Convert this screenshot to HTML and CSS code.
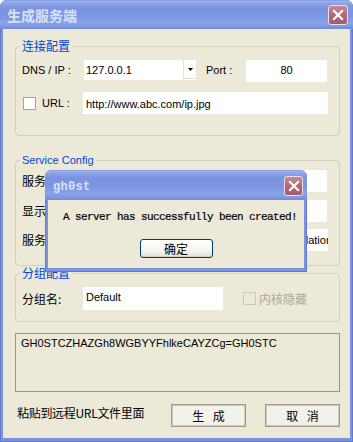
FILE: index.html
```html
<!DOCTYPE html>
<html>
<head>
<meta charset="utf-8">
<link rel="stylesheet" href="styles.css">
</head>
<body>
<div class="window">
  <div class="titlebar">
    <span class="title">生成服务端</span>
    <span class="close"><svg width="12" height="12" viewBox="0 0 12 12"><path d="M2 2L10 10M10 2L2 10" stroke="#fff" stroke-width="2.2" stroke-linecap="square"/></svg></span>
  </div>
  <div class="client">
    <div class="group g1">
      <div class="legend cjk">连接配置</div>
      <div class="row r1">
        <span class="label lbl-dns">DNS / IP :</span>
        <div class="combo">
          <span class="combo-text">127.0.0.1</span>
          <span class="combo-btn"><svg width="5" height="3" viewBox="0 0 5 3"><path d="M0 0H5L2.5 3Z" fill="#000"/></svg></span>
        </div>
        <span class="label lbl-port">Port :</span>
        <div class="field port">80</div>
      </div>
      <div class="row r2">
        <span class="check"></span>
        <span class="label lbl-url">URL :</span>
        <div class="field url">http://www.abc.com/ip.jpg</div>
      </div>
    </div>

    <div class="group g2">
      <div class="legend">Service Config</div>
      <div class="row ra">
        <span class="label cjk lbl-svc">服务名称:</span>
        <div class="field svc">Medialinks</div>
      </div>
      <div class="row rb">
        <span class="label cjk lbl-svc">显示名称:</span>
        <div class="field svc">Microsoft Device Manager</div>
      </div>
      <div class="row rc">
        <span class="label cjk lbl-svc">服务描述:</span>
        <div class="field svc end"><span class="tail">Monitors and Manages System Device Installation</span></div>
      </div>
    </div>

    <div class="group g3">
      <div class="legend cjk">分组配置</div>
      <div class="row rg">
        <span class="label cjk lbl-svc">分组名:</span>
        <div class="field grp">Default</div>
        <span class="check disabled"></span>
        <span class="label cjk dis">内核隐藏</span>
      </div>
    </div>

    <div class="textbox">GH0STCZHAZGh8WGBYYFhlkeCAYZCg=GH0STC</div>

    <div class="footer">
      <span class="hint cjk">粘贴到远程URL文件里面</span>
      <div class="buttons">
        <div class="btn cjk">生 成</div>
        <div class="btn cjk">取 消</div>
      </div>
    </div>
  </div>

  <div class="dialog">
    <div class="dlg-title">
      <span class="dlg-name">gh0st</span>
      <span class="close dlg-close"><svg width="12" height="12" viewBox="0 0 12 12"><path d="M2 2L10 10M10 2L2 10" stroke="#fff" stroke-width="2.2" stroke-linecap="square"/></svg></span>
    </div>
    <div class="dlg-body">
      <div class="dlg-msg">A server has successfully been created!</div>
      <div class="dlg-btn cjk">确定</div>
    </div>
  </div>
</div>
</body>
</html>
```

FILE: styles.css
```css
body {
  margin: 0;
  background: #ffffff;
  font-family: "Liberation Sans", "Noto Sans CJK SC", sans-serif;
  font-size: 11px;
  color: #000;
}

.window {
  position: relative;
  width: 353px;
  height: 442px;
  box-sizing: border-box;
  padding: 0 3px 4px;
  background: #7b92df;
  border-radius: 7px 7px 0 0;
  display: flex;
  flex-direction: column;
  overflow: hidden;
  box-shadow: inset 1px 0 0 #6379cf, inset -1px 0 0 #6379cf, inset 0 -1px 0 #6379cf;
}

.titlebar {
  height: 29px;
  margin: 0 -3px;
  padding: 0 5px 0 7px;
  display: flex;
  align-items: center;
  border-radius: 7px 7px 0 0;
  background: linear-gradient(180deg, #6d85d9 0px, #a4b7ef 1px, #8da4e8 3px, #7b94e0 8px, #7c96e1 17px, #8aa2e7 23px, #7c95e1 27px, #7189da 29px);
}

.title {
  flex: 1;
  font-family: "Noto Sans CJK SC", sans-serif;
  font-weight: bold;
  font-size: 14px;
  line-height: 16px;
  color: #d9e1f6;
  padding-top: 1px;
}

.close {
  width: 20px;
  height: 20px;
  box-sizing: border-box;
  border: 1px solid #e9dde6;
  border-radius: 3px;
  background: linear-gradient(180deg, #c98a98 0%, #b06779 50%, #a55b6e 100%);
  display: flex;
  align-items: center;
  justify-content: center;
}

.client {
  flex: 1;
  background: #ece9d8;
  padding: 0 10px 0 12px;
  display: flex;
  flex-direction: column;
}

.cjk {
  font-family: "Noto Sans CJK SC", sans-serif;
  font-size: 12px;
}

.group {
  box-sizing: border-box;
  border: 1px solid #d0d0bf;
  border-radius: 4px;
  padding: 0 10px 0 6px;
}

.legend {
  width: fit-content;
  margin: -8px 0 0 -2px;
  padding: 0 2px;
  height: 14px;
  line-height: 14px;
  background: #ece9d8;
  color: #0046d5;
}

.g1 { margin-top: 17px; height: 90px; }
.g2 { margin-top: 24px; height: 106px; }
.g3 { margin-top: 7px; height: 49px; }

.row {
  display: flex;
  align-items: center;
}

.label {
  line-height: 14px;
  white-space: nowrap;
}

.r1 { margin-top: 7px; align-items: flex-start; height: 23px; }
.r2 { margin-top: 9px; height: 22px; }
.ra { margin-top: 3px; height: 22px; }
.rb { margin-top: 8px; height: 22px; }
.rc { margin-top: 7px; height: 22px; }
.rg { margin-top: 7px; height: 23px; }

.lbl-dns { width: 62px; line-height: 20px; }
.lbl-port { width: 40px; margin-left: 10px; line-height: 20px; }
.lbl-url { width: 41px; margin-left: 6px; }
.lbl-svc { width: 61px; }

.field {
  background: #ffffff;
  box-sizing: border-box;
  padding-left: 3px;
  white-space: nowrap;
  overflow: hidden;
}

.combo {
  width: 112px;
  height: 20px;
  background: #fff;
  display: flex;
  align-items: center;
}

.combo-text {
  flex: 1;
  padding-left: 2px;
  line-height: 20px;
}

.combo-btn {
  width: 13px;
  height: 19px;
  box-sizing: border-box;
  border-left: 1px solid #e4e1d3;
  border-bottom: 1px solid #e4e1d3;
  display: flex;
  align-items: center;
  justify-content: center;
  align-self: flex-start;
}

.port {
  width: 81px;
  height: 22px;
  line-height: 20px;
  text-align: center;
  padding-left: 0;
}

.url {
  width: 245px;
  height: 22px;
  line-height: 24px;
}

.svc {
  width: 244px;
  height: 22px;
  line-height: 22px;
}

.end {
  display: flex;
  justify-content: flex-end;
  width: 245px;
}

.tail {
  margin-right: -4px;
  flex-shrink: 0;
}

.grp {
  width: 140px;
  height: 23px;
  line-height: 21px;
}

.check {
  width: 13px;
  height: 13px;
  box-sizing: border-box;
  border: 1px solid #a3a39b;
  background: #fff;
  margin-left: 1px;
  flex-shrink: 0;
}

.check.disabled {
  margin-left: 20px;
  margin-right: 3px;
  background: transparent;
  border-color: #cac8bb;
}

.dis {
  color: #aca899;
}

.textbox {
  margin-top: 11px;
  height: 59px;
  box-sizing: border-box;
  border: 1px solid #7f9db9;
  padding: 2px 5px;
  line-height: 14px;
}

.footer {
  margin-top: 12px;
  display: flex;
  align-items: flex-start;
}

.hint {
  margin-left: 2px;
  margin-top: 2px;
  line-height: 14px;
  letter-spacing: -0.3px;
}

.buttons {
  margin-left: auto;
  display: flex;
  gap: 19px;
}

.btn {
  width: 75px;
  height: 23px;
  box-sizing: border-box;
  border: 1px solid #9c9a8b;
  box-shadow: inset 0 0 0 1px #cdcbbd;
  background: #f3f2ea;
  display: flex;
  align-items: center;
  justify-content: center;
  line-height: 14px;
  word-spacing: 6px;
}

/* modal dialog over the window */
.dialog {
  position: absolute;
  left: 45px;
  top: 170px;
  width: 262px;
  height: 102px;
  box-sizing: border-box;
  padding: 0 3px 4px;
  background: #7b92df;
  border-radius: 7px 7px 0 0;
  display: flex;
  flex-direction: column;
  box-shadow: inset 1px 0 0 #6379cf, inset -1px 0 0 #6379cf, inset 0 -1px 0 #6379cf;
}

.dlg-title {
  height: 30px;
  margin: 0 -3px;
  padding: 0 4px 0 8px;
  display: flex;
  align-items: center;
  border-radius: 7px 7px 0 0;
  background: linear-gradient(180deg, #6d85d9 0px, #a4b7ef 1px, #8da4e8 3px, #7b94e0 8px, #7c96e1 17px, #8aa2e7 24px, #7c95e1 28px, #7189da 30px);
}

.dlg-name {
  flex: 1;
  font-family: "Liberation Mono", monospace;
  font-weight: bold;
  font-size: 12px;
  letter-spacing: 0.3px;
  color: #dce4f8;
  padding-top: 3px;
}

.dlg-close {
  width: 19px;
  height: 20px;
  margin-top: 1px;
}

.dlg-body {
  flex: 1;
  background: #ece9d8;
  display: flex;
  flex-direction: column;
  align-items: center;
}

.dlg-msg {
  align-self: flex-start;
  margin: 10px 0 0 15px;
  font-family: "Liberation Mono", monospace;
  font-size: 11px;
  letter-spacing: -0.6px;
  line-height: 14px;
  white-space: nowrap;
  -webkit-text-stroke: 0.2px #000;
}

.dlg-btn {
  margin-top: 15px;
  width: 73px;
  height: 19px;
  box-sizing: border-box;
  border: 1px solid #003c74;
  border-radius: 3px;
  background: linear-gradient(180deg, #ffffff 0%, #f6f5f0 60%, #e4e2d8 100%);
  box-shadow: inset 0 -1px 0 #d6d0c0;
  display: flex;
  align-items: center;
  justify-content: center;
  line-height: 14px;
}
```
